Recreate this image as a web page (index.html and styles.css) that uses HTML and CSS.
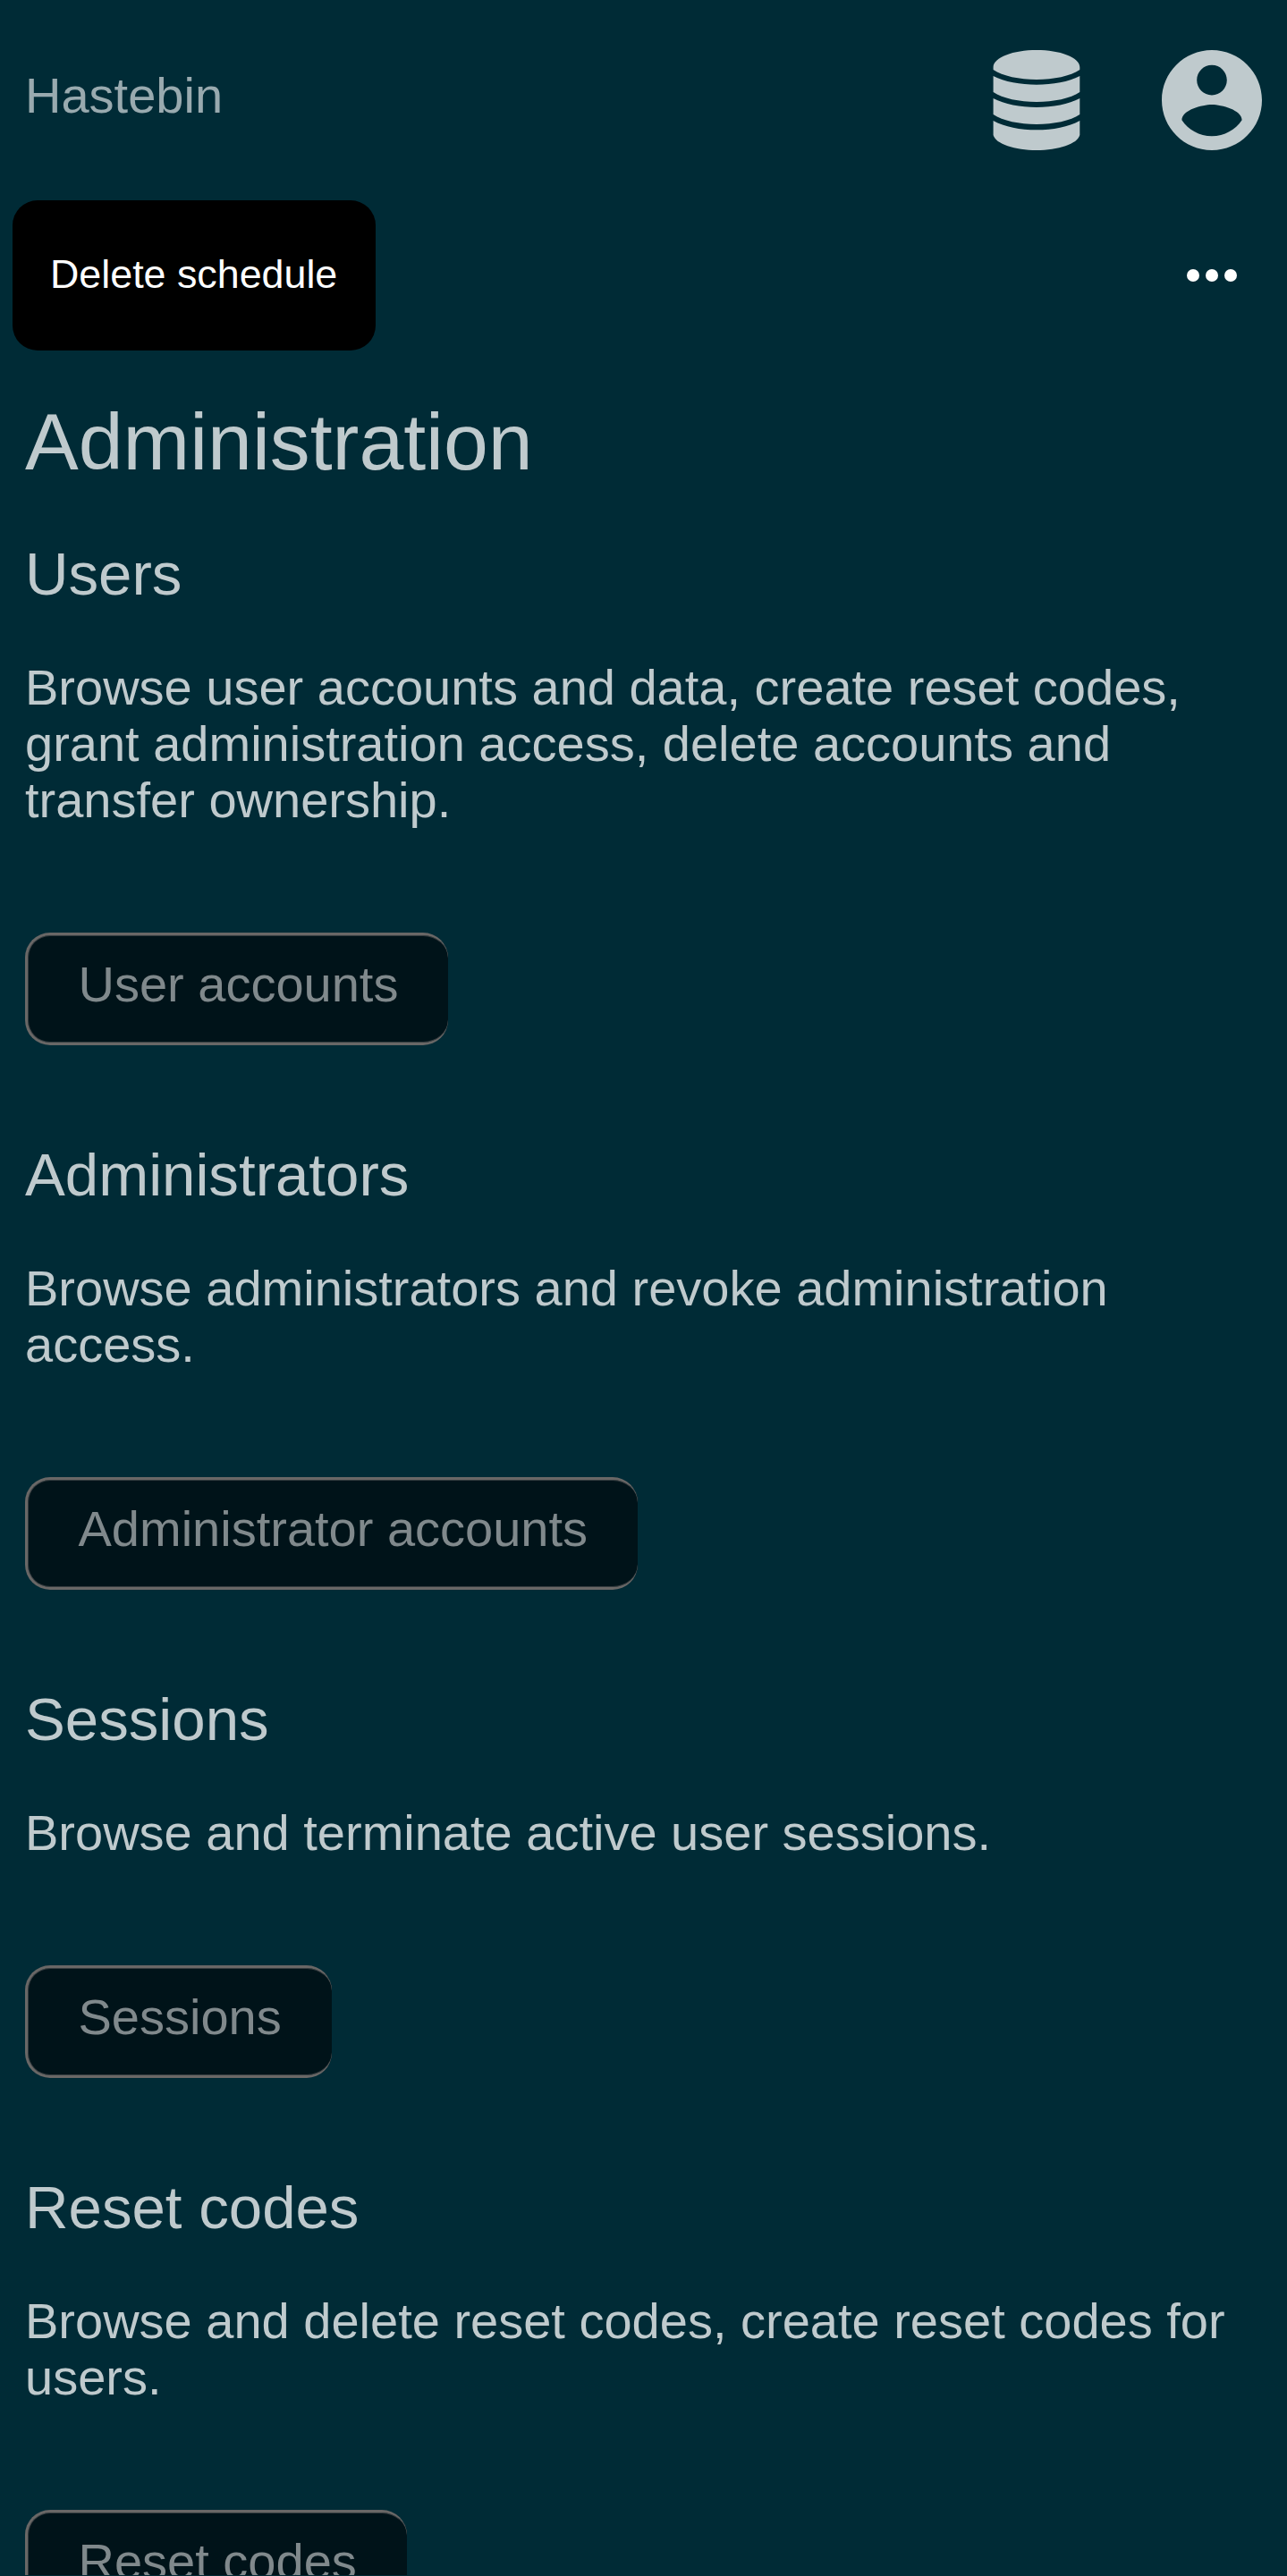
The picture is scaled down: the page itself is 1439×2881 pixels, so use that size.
FILE: index.html
```html
<!DOCTYPE html>
<html lang="en">
<head>
<meta charset="utf-8">
<title>Hastebin</title>
<link rel="stylesheet" href="styles.css">
</head>
<body>
<header class="header">
  <a class="brand">Hastebin</a>
  <nav class="nav">
    <svg class="icon" viewBox="0 0 112 112"><path d="M7.600 19C8 8 30 0 56 0S104.300 8 104.300 19V22C94 29 75 33 56 33S18 29 7.600 22ZM7.600 29C20 35.500 38 38.700 56 38.700S92 35.500 104.300 29V47C94 54 75 58 56 58S18 54 7.600 47ZM7.600 54C20 60.500 38 64 56 64S92 60.500 104.300 54V72C94 79 75 83 56 83S18 79 7.600 72ZM7.600 79C20 86 38 89.300 56 89.300S92 86 104.300 79V95C102 105 80 112 56 112S10 105 7.600 95Z"/></svg>
    <svg class="icon" viewBox="2 2 20 20"><path d="M12 2C6.480 2 2 6.480 2 12s4.480 10 10 10 10-4.480 10-10S17.520 2 12 2zm0 3c1.660 0 3 1.340 3 3s-1.340 3-3 3-3-1.340-3-3 1.340-3 3-3zm0 14.200c-2.500 0-4.710-1.280-6-3.220.030-1.990 4-3.080 6-3.080 1.990 0 5.970 1.090 6 3.080-1.290 1.940-3.500 3.220-6 3.220z"/></svg>
  </nav>
</header>
<div class="toolbar">
  <a class="tab">Delete schedule</a>
  <svg class="more" viewBox="0 0 56 14"><circle cx="7" cy="7" r="7"/><circle cx="28" cy="7" r="7"/><circle cx="49" cy="7" r="7"/></svg>
</div>
<main class="content">
  <h1 class="title">Administration</h1>
  <section class="section">
    <h2 class="subtitle">Users</h2>
    <p class="text">Browse user accounts and data, create reset codes, grant administration access, delete accounts and transfer ownership.</p>
    <a class="button">User accounts</a>
  </section>
  <section class="section">
    <h2 class="subtitle">Administrators</h2>
    <p class="text">Browse administrators and revoke administration access.</p>
    <a class="button">Administrator accounts</a>
  </section>
  <section class="section">
    <h2 class="subtitle">Sessions</h2>
    <p class="text">Browse and terminate active user sessions.</p>
    <a class="button">Sessions</a>
  </section>
  <section class="section">
    <h2 class="subtitle">Reset codes</h2>
    <p class="text">Browse and delete reset codes, create reset codes for users.</p>
    <a class="button">Reset codes</a>
  </section>
</main>
</body>
</html>
```
FILE: styles.css
```css
* { box-sizing: border-box; }
html { background: #002b36; overflow: hidden; }
body {
  margin: 0;
  height: 2880px;
  overflow: hidden;
  font: 56px/63px "Liberation Sans", Arial, sans-serif;
  color: #bfcacd;
}
.header {
  display: flex;
  justify-content: space-between;
  height: 224px;
  padding: 56px 28.5px 0 28px;
}
.brand { padding-top: 19px; color: #99aaaf; }
.nav { display: flex; gap: 84px; }
.icon { width: 112px; height: 112px; fill: #bfcacd; }
.toolbar {
  display: flex;
  justify-content: space-between;
  align-items: center;
  height: 168px;
  padding: 0 56.5px 0 14px;
}
.tab {
  height: 168px;
  padding: 0 43px 0 42px;
  border-radius: 28px;
  background: #000;
  color: #fff;
  font-size: 44.8px;
  line-height: 164px;
}
.more { width: 56px; height: 14px; fill: #fff; }
.content { padding: 52px 28px 0; }
.title { margin: 0 0 60px; font-size: 89.6px; line-height: 100px; font-weight: 400; }
.section { display: flex; flex-direction: column; align-items: flex-start; margin-bottom: 107px; }
.subtitle { margin: 0 0 58px; font-size: 67.2px; line-height: 75px; font-weight: 400; }
.text { margin: 0 0 117px; }
.button {
  height: 126px;
  padding: 23px 56px 0 56.5px;
  border: 3px solid #696766;
  border-right-width: 0;
  border-radius: 28px;
  background: #001319;
  box-shadow: inset 0 1px #353d40, inset 0 -1px #353d40, inset 1px 0 #353d40;
  color: #80898c;
}
```
